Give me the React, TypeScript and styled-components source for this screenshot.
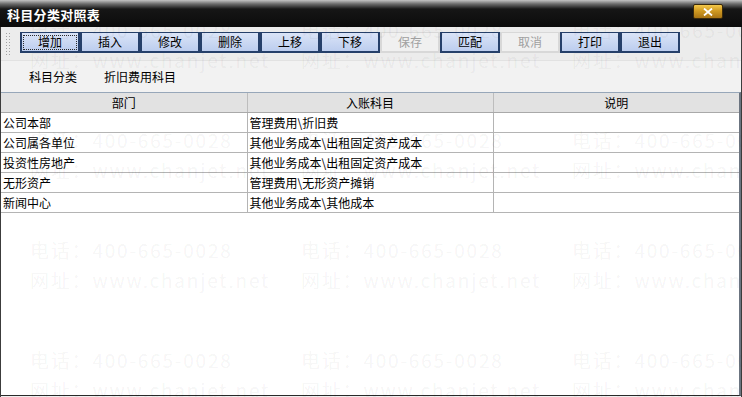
import React from "react";
import styled, { createGlobalStyle, css } from "styled-components";

const GlobalStyle = createGlobalStyle`
  html, body {
    margin: 0;
    padding: 0;
    background: #000;
  }
  body {
    font-family: "Noto Sans CJK SC", "Liberation Sans", sans-serif;
    font-size: 12px;
  }
`;

const Window = styled.div`
  position: relative;
  width: 742px;
  height: 397px;
  display: flex;
  flex-direction: column;
  background: #000;
  overflow: hidden;
`;

const TitleBar = styled.div`
  flex: none;
  height: 27px;
  display: flex;
  justify-content: space-between;
  padding: 0 19px 0 7px;
  box-sizing: border-box;
  background: linear-gradient(#c4c4c4 0, #6a6a6a 4px, #161616 9px, #0b0b0b 100%);
`;

const Title = styled.div`
  color: #fff;
  font-weight: 700;
  font-size: 13px;
  line-height: 29px;
  letter-spacing: 0.3px;
`;

const CloseButton = styled.div`
  margin-top: 4px;
  width: 30px;
  height: 15px;
  box-sizing: border-box;
  border: 1px solid #3a2a0c;
  border-radius: 2px;
  background: linear-gradient(#f4c84a 0, #d09a22 45%, #a87414 100%);
  display: flex;
  align-items: center;
  justify-content: center;
`;

const Body = styled.div`
  position: relative;
  flex: 1;
  display: flex;
  flex-direction: column;
  background: #efefef;
  border-left: 1px solid #3c3c3c;
  border-right: 1px solid #3c3c3c;
  padding-bottom: 1px;
  overflow: hidden;
`;

const Toolbar = styled.div`
  flex: none;
  height: 33px;
  display: flex;
  align-items: flex-start;
  padding: 5px 0 0 4px;
  box-sizing: border-box;
  background: #ececec;
`;

const Grip = styled.div`
  width: 7px;
  height: 24px;
  margin-right: 8px;
  background-image: radial-gradient(#a2a2a2 0.7px, transparent 1px);
  background-size: 3px 3px;
`;

const ToolButton = styled.div<{ $disabled?: boolean; $focused?: boolean }>`
  width: 60px;
  height: 21px;
  box-sizing: border-box;
  border-style: solid;
  border-width: 1px 2px 2px 2px;
  border-color: #26406a;
  background: linear-gradient(#dae4f7, #bccdee);
  color: #000;
  display: flex;
  align-items: center;
  justify-content: center;
  line-height: 1;
  ${(p) =>
    p.$disabled &&
    css`
      border-color: #d8d8d8;
      background: #f0f0f0;
      color: #a0a0a0;
    `}
  ${(p) =>
    p.$focused &&
    css`
      outline: 1px dotted #2a2a2a;
      outline-offset: -4px;
    `}
`;

const Tabs = styled.div`
  flex: none;
  height: 32px;
  display: flex;
  align-items: center;
  gap: 27px;
  padding-left: 28px;
  background: #f2f2f2;
  border-top: 1px solid #e2e2e2;
  box-sizing: border-box;
`;

const Tab = styled.span`
  color: #000;
`;

const GridArea = styled.div`
  flex: 1;
  background: #fff;
  border-top: 1px solid #97a7b9;
  border-right: 2px solid #6b7480;
  border-bottom: 1px solid #2a2a2a;
`;

const Table = styled.table`
  width: 100%;
  table-layout: fixed;
  border-collapse: collapse;
`;

const HeadCell = styled.th`
  height: 19px;
  padding: 0;
  background: #e2e2e2;
  font-weight: 400;
  text-align: center;
  border-bottom: 1px solid #a9a9a9;
  border-right: 1px solid #bdbdbd;
  &:last-child {
    border-right: none;
  }
`;

const Cell = styled.td`
  height: 19px;
  padding: 0 0 0 2px;
  white-space: nowrap;
  overflow: hidden;
  border-bottom: 1px solid #b4b4b4;
  border-right: 1px solid #b4b4b4;
  &:last-child {
    border-right: none;
  }
`;

const Watermark = styled.div`
  position: absolute;
  top: -12px;
  left: 29px;
  display: grid;
  grid-template-columns: repeat(3, 271px);
  grid-auto-rows: 110px;
  pointer-events: none;
  color: rgba(0, 0, 0, 0.055);
  font-size: 19px;
  line-height: 30px;
  letter-spacing: 1.8px;
  white-space: nowrap;
`;

const buttons = [
  { label: "增加", focused: true },
  { label: "插入" },
  { label: "修改" },
  { label: "删除" },
  { label: "上移" },
  { label: "下移" },
  { label: "保存", disabled: true },
  { label: "匹配" },
  { label: "取消", disabled: true },
  { label: "打印" },
  { label: "退出" },
];

const rows = [
  ["公司本部", "管理费用\\折旧费", ""],
  ["公司属各单位", "其他业务成本\\出租固定资产成本", ""],
  ["投资性房地产", "其他业务成本\\出租固定资产成本", ""],
  ["无形资产", "管理费用\\无形资产摊销", ""],
  ["新闻中心", "其他业务成本\\其他成本", ""],
];

const App: React.FC = () => {
  return (
    <>
      <GlobalStyle />
      <Window>
        <TitleBar>
          <Title>科目分类对照表</Title>
          <CloseButton>
            <svg width="10" height="8" viewBox="0 0 10 8">
              <path d="M1 0.5 L9 7.5 M9 0.5 L1 7.5" stroke="#fff" strokeWidth="1.8" />
            </svg>
          </CloseButton>
        </TitleBar>
        <Body>
          <Toolbar>
            <Grip />
            {buttons.map((b) => (
              <ToolButton key={b.label} $disabled={b.disabled} $focused={b.focused}>
                {b.label}
              </ToolButton>
            ))}
          </Toolbar>
          <Tabs>
            <Tab>科目分类</Tab>
            <Tab>折旧费用科目</Tab>
          </Tabs>
          <GridArea>
            <Table>
              <colgroup>
                <col style={{ width: 246 }} />
                <col style={{ width: 246 }} />
                <col />
              </colgroup>
              <thead>
                <tr>
                  <HeadCell>部门</HeadCell>
                  <HeadCell>入账科目</HeadCell>
                  <HeadCell>说明</HeadCell>
                </tr>
              </thead>
              <tbody>
                {rows.map((r) => (
                  <tr key={r[0]}>
                    {r.map((c, i) => (
                      <Cell key={i}>{c}</Cell>
                    ))}
                  </tr>
                ))}
              </tbody>
            </Table>
          </GridArea>
          <Watermark>
            {Array.from({ length: 12 }).map((_, i) => (
              <div key={i}>
                <div>电话：400-665-0028</div>
                <div>网址：www.chanjet.net</div>
              </div>
            ))}
          </Watermark>
        </Body>
      </Window>
    </>
  );
};

export default App;
